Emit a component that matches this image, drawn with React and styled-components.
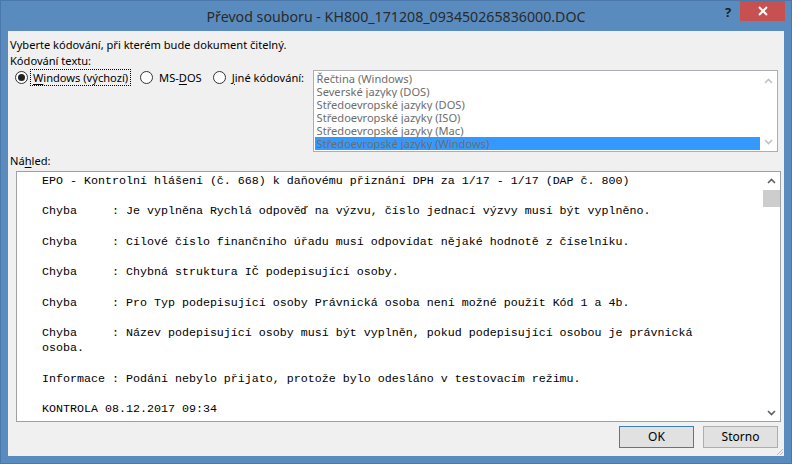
import React from 'react';
import styled, { createGlobalStyle } from 'styled-components';

const GlobalStyle = createGlobalStyle`
  html, body {
    margin: 0;
    padding: 0;
    background: #5a8bbe;
  }
  * { box-sizing: border-box; }
`;

const uiFont = `"Noto Sans", "Open Sans", sans-serif`;

const Window = styled.div`
  width: 792px;
  height: 464px;
  background: #5a8bbe;
  border: 1px solid #4a78aa;
  display: flex;
  flex-direction: column;
  font-family: ${uiFont};
  font-size: 11.1px;
  color: #000;
  overflow: hidden;
`;

const TitleBar = styled.div`
  height: 30px;
  position: relative;
  display: flex;
  align-items: center;
  justify-content: center;
`;

const Title = styled.div`
  font-size: 14.2px;
  color: #2a2a2a;
  margin-top: 1px;
`;

const Controls = styled.div`
  position: absolute;
  top: 0;
  right: 6px;
  display: flex;
  align-items: flex-start;
`;

const HelpButton = styled.div`
  width: 24px;
  height: 20px;
  font-size: 13px;
  font-weight: bold;
  color: #1e1e1e;
  text-align: center;
  line-height: 22px;
`;

const CloseButton = styled.div`
  width: 45px;
  height: 20px;
  background: #c75050;
  display: flex;
  align-items: center;
  justify-content: center;
`;

const Client = styled.div`
  flex: 1;
  margin: 0 7px 7px 7px;
  background: #f0f0f0;
  padding: 6px 6px 0 2px;
  display: flex;
  flex-direction: column;
`;

const Label = styled.div`
  line-height: 16px;
  height: 16px;
  white-space: nowrap;
`;

const EncodingRow = styled.div`
  display: flex;
  align-items: flex-start;
  margin-top: 1px;
  height: 83px;
`;

const RadioGroup = styled.div`
  display: flex;
  align-items: center;
  margin-top: -1px;
  height: 16px;
  padding-left: 5px;
  width: 303px;
`;

const RadioOption = styled.label`
  display: flex;
  align-items: center;
  margin-right: ${p => p.$gap || 0}px;
`;

const RadioCircle = styled.span`
  width: 13px;
  height: 13px;
  border-radius: 50%;
  border: 1px solid #333;
  background: #fff;
  display: flex;
  align-items: center;
  justify-content: center;
  flex-shrink: 0;
  &::after {
    content: '';
    display: ${p => (p.$checked ? 'block' : 'none')};
    width: 7px;
    height: 7px;
    border-radius: 50%;
    background: #222;
  }
`;

const RadioText = styled.span`
  margin-left: ${p => (p.$focused ? 3 : 4)}px;
  padding: 0 2px;
  line-height: 15px;
  outline: ${p => (p.$focused ? '1px dotted #000' : 'none')};
  white-space: nowrap;
`;

const Key = styled.span`
  text-decoration: underline;
  text-underline-offset: 2px;
`;

const ListBox = styled.div`
  width: 466px;
  height: 82px;
  border: 1px solid #abadb3;
  background: #fff;
  display: flex;
  padding: 1px 0 1px 1px;
`;

const ListItems = styled.div`
  flex: 1;
  display: flex;
  flex-direction: column;
`;

const ListItem = styled.div`
  height: 13px;
  line-height: 13px;
  padding-left: 2px;
  color: #6d6d6d;
  background: ${p => (p.$selected ? '#3399ff' : 'transparent')};
  white-space: nowrap;
  overflow: hidden;
`;

const ScrollBar = styled.div`
  width: 17px;
  display: flex;
  flex-direction: column;
  justify-content: space-between;
  align-items: center;
  background: #fff;
`;

const Arrow = styled.div`
  width: 17px;
  height: 17px;
  display: flex;
  align-items: center;
  justify-content: center;
`;

const Thumb = styled.div`
  width: 17px;
  height: 17px;
  background: #cdcdcd;
  margin-top: 1px;
`;

const ScrollTop = styled.div`
  display: flex;
  flex-direction: column;
`;

const Preview = styled.div`
  margin: 2px 0 0 6px;
  width: 765px;
  height: 251px;
  border: 1px solid #a0a0a0;
  background: #fff;
  display: flex;
`;

const PreviewText = styled.pre`
  flex: 1;
  margin: 0;
  padding: 2px 0 0 25px;
  font-family: "Liberation Mono", "Courier New", monospace;
  font-size: 11.67px;
  line-height: 15.2px;
  color: #000;
  white-space: pre;
  overflow: hidden;
`;

const ButtonRow = styled.div`
  display: flex;
  justify-content: flex-end;
  gap: 9px;
  margin-top: 4px;
  position: relative;
  height: 30px;
`;

const Button = styled.div`
  width: 75px;
  height: 22px;
  border: 1px solid ${p => (p.$default ? '#3c7fb1' : '#adadad')};
  background: #e1e1e1;
  display: flex;
  align-items: center;
  justify-content: center;
  line-height: 1;
  font-size: 12px;
`;

const Grip = styled.svg`
  position: absolute;
  right: -6px;
  bottom: 0;
`;

const ArrowIcon = ({ up, color }) => (
  <svg width="9" height="6" viewBox="0 0 9 6">
    <path
      d={up ? 'M1 5 L4.5 1.5 L8 5' : 'M1 1 L4.5 4.5 L8 1'}
      fill="none"
      stroke={color}
      strokeWidth="1.6"
    />
  </svg>
);

const encodings = [
  'Řečtina (Windows)',
  'Severské jazyky (DOS)',
  'Středoevropské jazyky (DOS)',
  'Středoevropské jazyky (ISO)',
  'Středoevropské jazyky (Mac)',
  'Středoevropské jazyky (Windows)',
];

const previewText = `EPO - Kontrolní hlášení (č. 668) k daňovému přiznání DPH za 1/17 - 1/17 (DAP č. 800)

Chyba     : Je vyplněna Rychlá odpověď na výzvu, číslo jednací výzvy musí být vyplněno.

Chyba     : Cílové číslo finančního úřadu musí odpovídat nějaké hodnotě z číselníku.

Chyba     : Chybná struktura IČ podepisující osoby.

Chyba     : Pro Typ podepisující osoby Právnická osoba není možné použít Kód 1 a 4b.

Chyba     : Název podepisující osoby musí být vyplněn, pokud podepisující osobou je právnická
osoba.

Informace : Podání nebylo přijato, protože bylo odesláno v testovacím režimu.

KONTROLA 08.12.2017 09:34`;

export default function App() {
  return (
    <>
      <GlobalStyle />
      <Window>
        <TitleBar>
          <Title>Převod souboru - KH800_171208_093450265836000.DOC</Title>
          <Controls>
            <HelpButton>?</HelpButton>
            <CloseButton>
              <svg width="10" height="10" viewBox="0 0 10 10">
                <path d="M1 1 L9 9 M9 1 L1 9" stroke="#fff" strokeWidth="2" />
              </svg>
            </CloseButton>
          </Controls>
        </TitleBar>
        <Client>
          <Label>Vyberte kódování, při kterém bude dokument čitelný.</Label>
          <Label>Kódování textu:</Label>
          <EncodingRow>
            <RadioGroup>
              <RadioOption $gap={10}>
                <RadioCircle $checked />
                <RadioText $focused>
                  <Key>W</Key>indows (výchozí)
                </RadioText>
              </RadioOption>
              <RadioOption $gap={9}>
                <RadioCircle />
                <RadioText>
                  MS-<Key>D</Key>OS
                </RadioText>
              </RadioOption>
              <RadioOption>
                <RadioCircle />
                <RadioText>
                  <Key>J</Key>iné kódování:
                </RadioText>
              </RadioOption>
            </RadioGroup>
            <ListBox>
              <ListItems>
                {encodings.map((e, i) => (
                  <ListItem key={e} $selected={i === encodings.length - 1}>
                    {e}
                  </ListItem>
                ))}
              </ListItems>
              <ScrollBar>
                <Arrow>
                  <ArrowIcon up color="#c2c2c2" />
                </Arrow>
                <Arrow>
                  <ArrowIcon color="#c2c2c2" />
                </Arrow>
              </ScrollBar>
            </ListBox>
          </EncodingRow>
          <Label>
            Ná<Key>h</Key>led:
          </Label>
          <Preview>
            <PreviewText>{previewText}</PreviewText>
            <ScrollBar>
              <ScrollTop>
                <Arrow>
                  <ArrowIcon up color="#606060" />
                </Arrow>
                <Thumb />
              </ScrollTop>
              <Arrow>
                <ArrowIcon color="#606060" />
              </Arrow>
            </ScrollBar>
          </Preview>
          <ButtonRow>
            <Button $default>OK</Button>
            <Button>Storno</Button>
            <Grip width="8" height="8" viewBox="0 0 8 8">
              <path d="M7 1 L1 7 M7 4 L4 7" stroke="#b8b8b8" strokeWidth="1" />
            </Grip>
          </ButtonRow>
        </Client>
      </Window>
    </>
  );
}
